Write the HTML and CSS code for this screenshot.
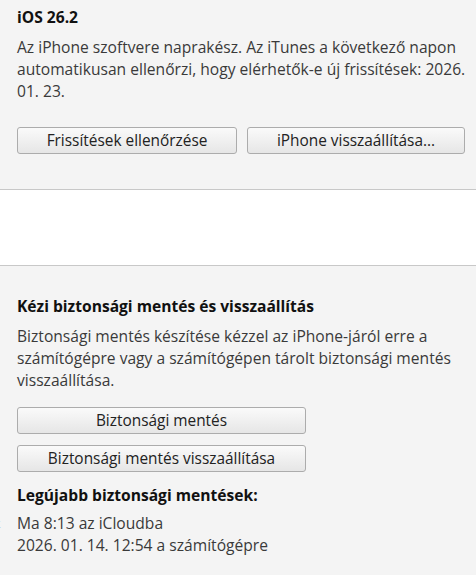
FILE: index.html
```html
<!DOCTYPE html>
<html lang="hu">
<head>
<meta charset="utf-8">
<link rel="stylesheet" href="styles.css">
</head>
<body>
<section class="panel top">
  <h2 class="title">iOS 26.2</h2>
  <p class="desc">Az iPhone szoftvere naprakész. Az iTunes a következő napon automatikusan ellenőrzi, hogy elérhetők-e új frissítések: 2026. 01. 23.</p>
  <div class="btn-row">
    <button class="btn half">Frissítések ellenőrzése</button>
    <button class="btn half">iPhone visszaállítása...</button>
  </div>
</section>
<div class="gap"></div>
<section class="panel bottom">
  <h2 class="title">Kézi biztonsági mentés és visszaállítás</h2>
  <p class="desc">Biztonsági mentés készítése kézzel az iPhone-járól erre a számítógépre vagy a számítógépen tárolt biztonsági mentés visszaállítása.</p>
  <div class="btn-col">
    <button class="btn wide">Biztonsági mentés</button>
    <button class="btn wide">Biztonsági mentés visszaállítása</button>
  </div>
  <h3 class="subtitle">Legújabb biztonsági mentések:</h3>
  <p class="list"><span class="edge">k</span>Ma 8:13 az iCloudba<br>2026. 01. 14. 12:54 a számítógépre</p>
</section>
</body>
</html>
```
FILE: styles.css
```css
html, body {
  margin: 0;
  padding: 0;
  background: #f4f4f4;
  font-family: "Open Sans", "Noto Sans", sans-serif;
  font-size: 15.6px;
  color: #3a3a3a;
  overflow: hidden;
}
.panel {
  background: #f4f4f4;
  padding: 0 8px 0 17px;
}
.top {
  padding-top: 6px;
  padding-bottom: 35px;
  border-bottom: 1px solid #c8c8c8;
}
.gap {
  height: 75px;
  background: #ffffff;
}
.bottom {
  border-top: 1px solid #c8c8c8;
  padding-top: 29px;
  padding-bottom: 20px;
}
.title, .subtitle {
  margin: 0;
  font-size: 15.6px;
  font-weight: 700;
  color: #111;
  line-height: 22px;
}
.desc {
  margin: 8px 0 0;
  line-height: 22px;
}
.btn-row {
  display: flex;
  gap: 10px;
  margin-top: 25px;
}
.btn {
  font-family: inherit;
  font-size: 15.4px;
  color: #222;
  height: 27px;
  padding: 0;
  border: 1px solid #acacac;
  border-radius: 3px;
  background: linear-gradient(#fafafa, #e6e6e6);
  line-height: 24px;
}
.half {
  width: 220px;
}
.half + .half {
  width: 218px;
}
.btn-col {
  display: flex;
  flex-direction: column;
  gap: 11px;
  margin-top: 16px;
}
.wide {
  width: 289px;
}
.subtitle {
  margin-top: 12px;
}
.list {
  position: relative;
  margin: 6px 0 0;
  line-height: 22px;
}
.edge {
  position: absolute;
  left: -23px;
  top: 1px;
  font-size: 12px;
  color: #555;
}
```
